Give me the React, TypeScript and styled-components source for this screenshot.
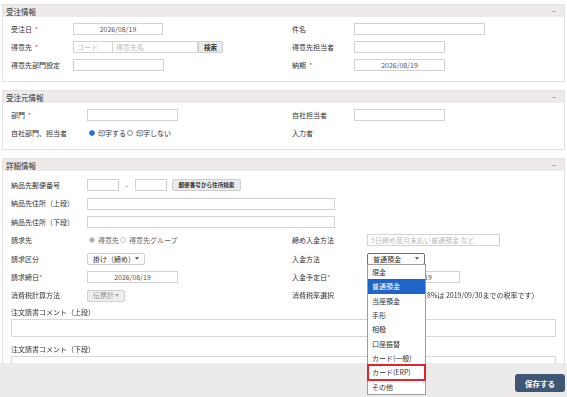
import React from "react";
import styled, { createGlobalStyle, css } from "styled-components";

const GlobalStyle = createGlobalStyle`
  html, body {
    margin: 0;
    padding: 0;
    background: #fff;
  }
  body {
    font-family: "Noto Sans CJK JP", "Noto Sans", sans-serif;
    font-size: 7px;
    line-height: 1.2;
    color: #333;
  }
`;

const Page = styled.div`
  display: flex;
  flex-direction: column;
  gap: 8px;
  padding: 4px 2px 0;
  height: 397px;
  box-sizing: border-box;
  overflow: hidden;
`;

const Panel = styled.section`
  border: 1px solid #e4e2e2;
  background: #fff;
  flex-shrink: 0;
`;

const PanelHeader = styled.div`
  height: 12px;
  background: #eeeaea;
  display: flex;
  align-items: center;
  justify-content: space-between;
  padding: 0 8px 0 3px;
  font-size: 7.5px;
  color: #333;
`;

const Collapse = styled.span`
  color: #666;
  font-size: 7px;
`;

const PanelBody = styled.div<{ $top?: number; $bottom?: number }>`
  padding: ${p => p.$top ?? 3}px 8px ${p => p.$bottom ?? 7}px 8px;
`;

const Row = styled.div<{ $h?: number }>`
  display: grid;
  grid-template-columns: 281px 1fr;
  height: ${p => p.$h ?? 18}px;
`;

const Field = styled.div<{ $span?: boolean }>`
  display: flex;
  align-items: center;
  min-width: 0;
  white-space: nowrap;
  ${p =>
    p.$span &&
    css`
      grid-column: 1 / -1;
    `}
`;

const Label = styled.span<{ $w: number }>`
  width: ${p => p.$w}px;
  flex-shrink: 0;
  color: #333;
`;

const Req = styled.span<{ $gap?: boolean }>`
  color: #e8383d;
  margin-left: ${p => (p.$gap ? 3 : 0)}px;
`;

const Input = styled.input<{ $w: number; $center?: boolean }>`
  width: ${p => p.$w}px;
  flex-shrink: 0;
  height: 12px;
  box-sizing: border-box;
  border: 1px solid #d3d3d3;
  border-radius: 0;
  padding: 0 3px;
  margin: 0;
  font-family: inherit;
  font-size: 7px;
  color: #555;
  background: #fff;
  text-align: ${p => (p.$center ? "center" : "left")};
  outline: none;
  &::placeholder {
    color: #bcbcbc;
  }
`;

const Group = styled.div`
  display: flex;
  align-items: center;
`;

const SmallButton = styled.button<{ $w: number; $size?: number }>`
  width: ${p => p.$w}px;
  flex-shrink: 0;
  height: 12px;
  box-sizing: border-box;
  padding: 0;
  margin: 0;
  border: 1px solid #cfcfcf;
  border-radius: 2px;
  background: #ebebeb;
  font-family: inherit;
  font-size: ${p => p.$size ?? 6.5}px;
  font-weight: bold;
  color: #333;
`;

const Dash = styled.span`
  width: 16px;
  text-align: center;
  color: #555;
`;

const SelectBox = styled.div<{ $w: number; $active?: boolean; $disabled?: boolean }>`
  position: relative;
  display: flex;
  align-items: center;
  justify-content: space-between;
  flex-shrink: 0;
  width: ${p => p.$w}px;
  height: 12px;
  box-sizing: border-box;
  padding: 0 5px;
  border: 1px solid ${p => (p.$active ? "#6e6e6e" : "#cfcfcf")};
  border-radius: 2px;
  background: ${p => (p.$disabled ? "#eeeeee" : "#fff")};
  color: ${p => (p.$disabled ? "#999" : "#333")};
`;

const Caret = styled.span<{ $light?: boolean }>`
  width: 0;
  height: 0;
  border-left: 2px solid transparent;
  border-right: 2px solid transparent;
  border-top: 3px solid ${p => (p.$light ? "#aaa" : "#666")};
`;

const OptionList = styled.div`
  position: absolute;
  top: 100%;
  left: -1px;
  width: 59px;
  border: 1px solid #9d9d9d;
  background: #fff;
  z-index: 20;
  box-sizing: border-box;
`;

const Option = styled.div<{ $selected?: boolean; $marked?: boolean }>`
  height: 14.4px;
  line-height: 14.4px;
  padding-left: 4px;
  color: ${p => (p.$selected ? "#fff" : "#333")};
  background: ${p => (p.$selected ? "#1f64c8" : "#fff")};
  ${p =>
    p.$marked &&
    css`
      outline: 2px solid #e2252c;
      outline-offset: -1px;
    `}
`;

const RadioGroup = styled.div<{ $disabled?: boolean }>`
  display: flex;
  align-items: center;
  padding-left: 2px;
  color: ${p => (p.$disabled ? "#666" : "#333")};
`;

const RadioDot = styled.span<{ $checked?: boolean; $disabled?: boolean }>`
  width: 6px;
  height: 6px;
  border-radius: 50%;
  box-sizing: border-box;
  margin-right: 3px;
  border: 1px solid ${p => (p.$disabled ? "#c8c8c8" : p.$checked ? "#2f7de0" : "#8d8d8d")};
  background: ${p =>
    p.$checked
      ? p.$disabled
        ? "radial-gradient(circle, #a9a9a9 0 1.6px, #e0e0e0 1.9px)"
        : "radial-gradient(circle, #1c6fe0 0 1.8px, #5a9cf0 2.2px)"
      : "#fff"};
`;

const Note = styled.span`
  margin-left: 53px;
  color: #333;
`;

const CommentLabel = styled.div`
  height: 14px;
  line-height: 14px;
`;

const CommentArea = styled.textarea`
  display: block;
  width: 100%;
  height: 18px;
  box-sizing: border-box;
  border: 1px solid #d8d8d8;
  resize: none;
  margin: 0 0 5px;
  font-family: inherit;
  outline: none;
`;

const Footer = styled.footer`
  position: fixed;
  left: 0;
  right: 0;
  bottom: 0;
  height: 34px;
  background: #edeaea;
  display: flex;
  justify-content: flex-end;
  align-items: flex-start;
  padding: 11px 2px 0;
  box-sizing: border-box;
  z-index: 10;
`;

const SaveButton = styled.button`
  width: 50px;
  height: 18px;
  border: 0;
  border-radius: 3px;
  background: #3e5773;
  color: #fff;
  font-family: inherit;
  font-size: 7.5px;
  font-weight: bold;
  padding: 0;
`;

const paymentOptions = [
  "現金",
  "普通預金",
  "当座預金",
  "手形",
  "相殺",
  "口座振替",
  "カード(一般)",
  "カード(ERP)",
  "その他",
];

const Header = ({ title }: { title: string }) => (
  <PanelHeader>
    <span>{title}</span>
    <Collapse>−</Collapse>
  </PanelHeader>
);

export default function App() {
  return (
    <>
      <GlobalStyle />
      <Page>
        <Panel>
          <Header title="受注情報" />
          <PanelBody>
            <Row>
              <Field>
                <Label $w={62}>受注日<Req $gap>*</Req></Label>
                <Input $w={90} $center defaultValue="2026/08/19" />
              </Field>
              <Field>
                <Label $w={62}>件名</Label>
                <Input $w={131} />
              </Field>
            </Row>
            <Row>
              <Field>
                <Label $w={62}>得意先<Req $gap>*</Req></Label>
                <Group>
                  <Input $w={40} placeholder="コード" />
                  <Input $w={85} placeholder="得意先名" style={{ borderLeft: 0 }} />
                  <SmallButton $w={25}>検索</SmallButton>
                </Group>
              </Field>
              <Field>
                <Label $w={62}>得意先担当者</Label>
                <Input $w={91} />
              </Field>
            </Row>
            <Row>
              <Field>
                <Label $w={62}>得意先部門設定</Label>
                <Input $w={91} />
              </Field>
              <Field>
                <Label $w={62}>納期<Req $gap>*</Req></Label>
                <Input $w={91} $center defaultValue="2026/08/19" />
              </Field>
            </Row>
          </PanelBody>
        </Panel>

        <Panel>
          <Header title="受注元情報" />
          <PanelBody>
            <Row>
              <Field>
                <Label $w={76}>部門<Req $gap>*</Req></Label>
                <Input $w={91} />
              </Field>
              <Field>
                <Label $w={62}>自社担当者</Label>
                <Input $w={91} />
              </Field>
            </Row>
            <Row>
              <Field>
                <Label $w={76}>自社部門、担当者</Label>
                <RadioGroup>
                  <RadioDot $checked />
                  <span>印字する</span>
                  <RadioDot style={{ marginLeft: 1 }} />
                  <span>印字しない</span>
                </RadioGroup>
              </Field>
              <Field>
                <Label $w={62}>入力者</Label>
              </Field>
            </Row>
          </PanelBody>
        </Panel>

        <Panel>
          <Header title="詳細情報" />
          <PanelBody $top={5} $bottom={20}>
            <Row $h={18.4}>
              <Field $span>
                <Label $w={76}>納品先郵便番号</Label>
                <Input $w={32} />
                <Dash>-</Dash>
                <Input $w={32} />
                <SmallButton $w={69} $size={5.6} style={{ marginLeft: 5 }}>
                  郵便番号から住所検索
                </SmallButton>
              </Field>
            </Row>
            <Row $h={18.4}>
              <Field $span>
                <Label $w={76}>納品先住所（上段）</Label>
                <Input $w={248} />
              </Field>
            </Row>
            <Row $h={18.4}>
              <Field $span>
                <Label $w={76}>納品先住所（下段）</Label>
                <Input $w={248} />
              </Field>
            </Row>
            <Row $h={18.4}>
              <Field>
                <Label $w={76}>請求先</Label>
                <RadioGroup $disabled>
                  <RadioDot $checked $disabled />
                  <span>得意先</span>
                  <RadioDot $disabled style={{ marginLeft: 1 }} />
                  <span>得意先グループ</span>
                </RadioGroup>
              </Field>
              <Field>
                <Label $w={75}>締め入金方法</Label>
                <Input $w={133} placeholder="5日締め翌月末払い普通預金 など" />
              </Field>
            </Row>
            <Row $h={18.4}>
              <Field>
                <Label $w={76}>請求区分</Label>
                <SelectBox $w={58}>
                  <span>掛け（締め）</span>
                  <Caret />
                </SelectBox>
              </Field>
              <Field>
                <Label $w={75}>入金方法</Label>
                <SelectBox $w={58} $active>
                  <span>普通預金</span>
                  <Caret />
                  <OptionList>
                    {paymentOptions.map(o => (
                      <Option key={o} $selected={o === "普通預金"} $marked={o === "カード(ERP)"}>
                        {o}
                      </Option>
                    ))}
                  </OptionList>
                </SelectBox>
              </Field>
            </Row>
            <Row $h={18.4}>
              <Field>
                <Label $w={76}>請求締日<Req>*</Req></Label>
                <Input $w={91} $center defaultValue="2026/08/19" />
              </Field>
              <Field>
                <Label $w={75}>入金予定日<Req>*</Req></Label>
                <Input $w={93} $center defaultValue="2026/08/19" />
              </Field>
            </Row>
            <Row $h={18.4}>
              <Field>
                <Label $w={76}>消費税計算方法</Label>
                <SelectBox $w={38} $disabled>
                  <span>伝票計</span>
                  <Caret $light />
                </SelectBox>
              </Field>
              <Field>
                <Label $w={75}>消費税率選択</Label>
                <Note>（8%は 2019/09/30までの税率です）</Note>
              </Field>
            </Row>
            <CommentLabel>注文請書コメント（上段）</CommentLabel>
            <CommentArea />
            <CommentLabel>注文請書コメント（下段）</CommentLabel>
            <CommentArea />
          </PanelBody>
        </Panel>
      </Page>
      <Footer>
        <SaveButton>保存する</SaveButton>
      </Footer>
    </>
  );
}
